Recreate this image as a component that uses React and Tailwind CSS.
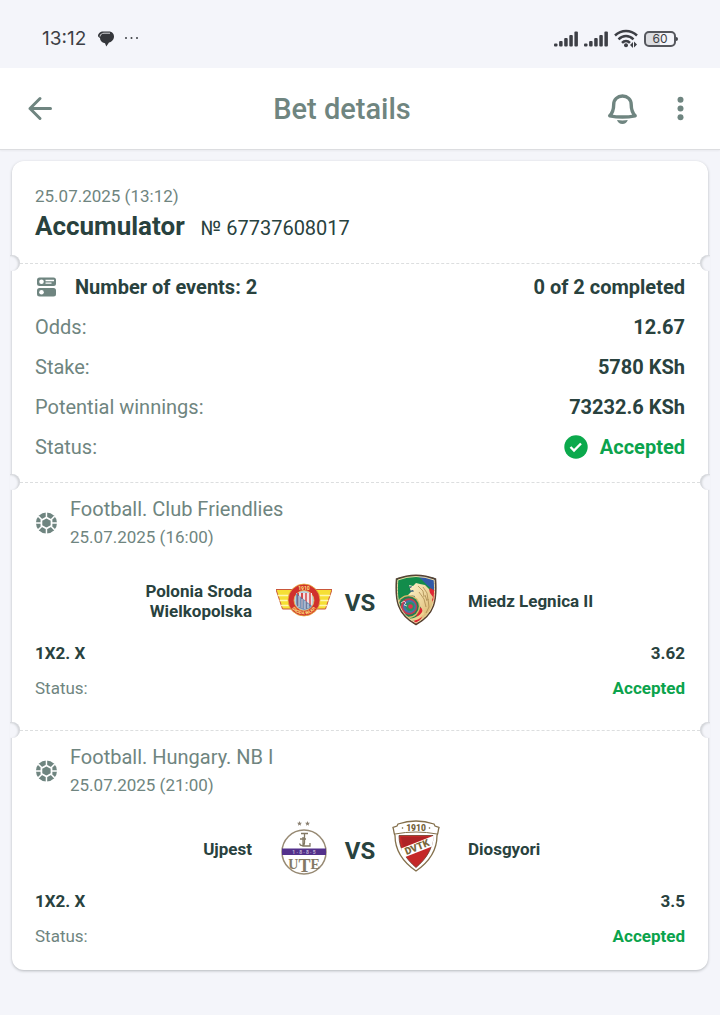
import React from 'react';

const StatusBar = () => {
  return (
    <div className="flex h-17 items-center justify-between pt-2.5 pr-[42px] pl-[42px] text-[#3d3f45]">
      <div className="flex items-center">
        <span className="font-['Inter',sans-serif] text-[19px] leading-6">13:12</span>
        <svg className="ml-3 h-4 w-4" viewBox="0 0 16 16">
          <path d="M5 .5h6c3 0 5 2.200 5 5s-2 5.500-5 6L8.300 15.500 7 12.300C3.500 11.500 2 9.500 2 7 1 6.500 0 5.800 0 4.800 0 2.500 2.500.5 5 .5z" fill="#35373b" />
          <path d="M2 5.500C2.200 3.300 4 2.200 6 2.200h6" stroke="#d5d6da" strokeWidth="1" fill="none" />
        </svg>
        <svg className="ml-2.5 h-4 w-4" viewBox="0 0 16 16" fill="currentColor">
          <circle cx="2" cy="7" r="1" />
          <circle cx="7.500" cy="7" r="1" />
          <circle cx="13" cy="7" r="1" />
        </svg>
      </div>
      <div className="flex items-center gap-1.5">
        <Signal />
        <Signal />
        <svg className="h-5 w-6" viewBox="0 0 24 20" fill="none" stroke="currentColor" strokeWidth="2.500">
          <path d="M1 6.500C7.500.5 16.500.5 23 6.500" />
          <path d="M4.500 10.300C9 6 15 6 19.500 10.300" />
          <path d="M8 13.800c2.300-2.300 5.700-2.300 8 0" />
          <circle cx="12" cy="16.300" r="2" fill="currentColor" stroke="none" />
          <path d="M16 16l3-3v6zM23 15.500L20 18.500v-6z" fill="currentColor" stroke="none" />
        </svg>
        <div className="flex items-center">
          <div className="flex h-4 w-8 items-center justify-center rounded-[5px] border-2 border-[#55575d] bg-linear-to-r from-[#dcdde1] from-50% to-transparent to-50% font-['Inter',sans-serif] text-xs leading-3">
            60
          </div>
          <div className="h-1 w-0.5 rounded-r-sm bg-[#45474d]" />
        </div>
      </div>
    </div>
  );
};

const Signal = () => (
  <svg className="h-4 w-6" viewBox="0 0 24 16" fill="currentColor">
    <rect x="0" y="12.500" width="3.500" height="3" rx="1" />
    <rect x="5.100" y="10" width="3.500" height="5.500" rx="1" />
    <rect x="10.200" y="7" width="3.500" height="8.500" rx="1" />
    <rect x="15.300" y="4" width="3.500" height="11.500" rx="1" />
    <rect x="20.400" y="0.500" width="3.500" height="15" rx="1" />
  </svg>
);

const Header = () => {
  return (
    <header className="flex h-[82px] items-center justify-between border-b border-[#dcdde0] bg-white px-6 text-[#6f8580] shadow-xs">
      <div className="flex flex-1">
        <button type="button" aria-label="Back">
          <svg className="h-8 w-8" viewBox="0 0 32 32" fill="none" stroke="currentColor" strokeWidth="3" strokeLinecap="round" strokeLinejoin="round">
            <path d="M26.500 15.500H6M16 5.500l-10 10 10 10" />
          </svg>
        </button>
      </div>
      <h1 className="pr-9 text-[29px] leading-9 font-medium">Bet details</h1>
      <div className="flex flex-1 items-center justify-end gap-[26px]">
        <button type="button" aria-label="Notifications">
          <svg className="h-8 w-8" viewBox="0 0 32 32" fill="none" stroke="currentColor" strokeWidth="3.400" strokeLinejoin="round">
            <path d="M16.500 3c-5 0-8.800 3.500-8.800 8.500 0 6-1 8.300-4 11.300 8 1.600 17.500 1.600 25.500 0-3-3-4-5.300-4-11.300 0-5-3.700-8.500-8.700-8.500z" />
            <path d="M11 27c3.600.6 7.200.6 10.800 0-1 2.800-2.700 3.900-5.400 3.900S12 29.800 11 27z" fill="currentColor" stroke="none" />
          </svg>
        </button>
        <button type="button" aria-label="More">
          <svg className="h-8 w-8" viewBox="0 0 32 32" fill="currentColor">
            <circle cx="16.500" cy="6.800" r="3" />
            <circle cx="16.500" cy="15.500" r="3" />
            <circle cx="16.500" cy="24.200" r="3" />
          </svg>
        </button>
      </div>
    </header>
  );
};

const Divider = () => (
  <div className="-my-2 flex h-4 items-center justify-between">
    <div className="-ml-0.5 h-4 w-2.5 rounded-r-full bg-[#f4f5fa] shadow-[inset_-2px_1px_2px_#d3d5d9]" />
    <div className="flex-1 border-t border-dashed border-[#dcdedf]" />
    <div className="-mr-0.5 h-4 w-2.5 rounded-l-full bg-[#f4f5fa] shadow-[inset_2px_1px_2px_#d3d5d9]" />
  </div>
);

const EventsIcon = () => (
  <svg className="h-5 w-5" viewBox="0 0 20 20">
    <rect x="0" y="0.500" width="19" height="8.500" rx="2.500" fill="#6f8580" />
    <rect x="0" y="11" width="19" height="8.500" rx="2.500" fill="#6f8580" />
    <circle cx="4.500" cy="4.800" r="2.300" fill="#fff" />
    <circle cx="4.500" cy="15.200" r="2.300" fill="#fff" />
    <path d="M8.500 3.500H17M8.500 6.200h6" stroke="#fff" strokeWidth="1.300" />
  </svg>
);

const BallIcon = () => (
  <svg className="h-[22px] w-[22px]" viewBox="0 0 24 24">
    <circle cx="12.500" cy="12" r="11.500" fill="#6f8580" />
    <path d="M12.500 6l5.500 3v6l-5.500 3-5.500-3V9z" fill="#6f8580" stroke="#fff" strokeWidth="1.900" />
    <path d="M12.500 6V0M12.500 18v6M7.500 8.500L3.500 4.500M17.500 8.500l4-4M7.500 15.500l-4 4M17.500 15.500l4 4M7 12H0M18 12h6" stroke="#fff" strokeWidth="1.600" />
  </svg>
);

const PoloniaLogo = () => (
  <svg className="h-15 w-14" viewBox="0 0 56 60">
    <path d="M0 18.500h56l-6.500 19.500h-43z" fill="#f6df35" stroke="#c9573a" strokeWidth="1" />
    <path d="M1.500 24.500h53M3.500 29.500h49M5 34.500h46" stroke="#fff6b0" strokeWidth="1.300" />
    <circle cx="28" cy="29" r="16" fill="#d0302d" stroke="#e9b23c" strokeWidth="0.800" />
    <circle cx="28" cy="29.500" r="10" fill="#b8cfdd" stroke="#efc14d" strokeWidth="0.700" />
    <path d="M20 22h16v10c0 4-4 6-8 7-4-1-8-3-8-7z" fill="#f0e3e4" />
    <path d="M22 22v13M26 22v15" stroke="#d6494a" strokeWidth="2" />
    <path d="M30 22v16M34 22v13" stroke="#d6494a" strokeWidth="1.500" />
    <path d="M20 22l16 13c-1 2-4 3-8 4-4-1-8-3-8-7z" fill="#4d79a8" fillOpacity=".75" />
    <path d="M23 25v11M26 28v9M29 30v8M32 33v4" stroke="#dbe7f1" strokeWidth=".9" />
    <path id="polonia-arc" d="M14.500 34.500C19 46.500 37 46.500 41.500 34.500" fill="none" />
    <text x="28" y="18.500" textAnchor="middle" fontSize="5" fontWeight="700" fill="#ffe27a">1910</text>
    <text fontSize="4.500" fontWeight="700" fill="#ffe27a">
      <textPath href="#polonia-arc" startOffset="50%" textAnchor="middle">SRODA WLKP.</textPath>
    </text>
  </svg>
);

const MiedzLogo = () => (
  <svg className="h-15 w-14" viewBox="0 0 56 60">
    <defs>
      <clipPath id="miedz-shield">
        <path d="M8.500 8Q28 .5 47.500 8C49 29 47 43 28 53.500 9 43 7 29 8.500 8z" />
      </clipPath>
      <linearGradient id="miedz-gold" x1="0" y1="0" x2="1" y2="1">
        <stop offset="0" stopColor="#fff3cc" />
        <stop offset=".5" stopColor="#ecd49a" />
        <stop offset="1" stopColor="#d2a95c" />
      </linearGradient>
    </defs>
    <g clipPath="url(#miedz-shield)">
      <path d="M0 0h56v60H0z" fill="#128c4b" />
      <path d="M25 0h31v27L40 15z" fill="#315aa8" />
      <path d="M42 17l8 4v40H0V42l26 8z" fill="#df2635" />
      {/* lion's mane and head */}
      <path d="M21 14l4 1 3-3 4 1 5 1 4 4 1 4 3 4-1 3 2 4-2 3 1 5-3 2-1 4-4 1-3 4-5 1 4-5 2-5-1-5-3-4-6-1-5 1-1-3 3-1-3-2 1-4 3-3z" fill="url(#miedz-gold)" />
      <path d="M30 15l5 5 1 6M35 16l4 6 1 7M31 21l5 7 2 8M40 28l1 8-3 6M37 24l2 6" stroke="#a18046" strokeWidth=".7" fill="none" />
      <path d="M20 16l4-1-1 2zM21 20l4-1 1 1.500-4 .5zM20 26l4-1.500 3 .5-1 2z" fill="#335f7c" />
      <circle cx="20.500" cy="35.500" r="11.500" fill="#dcb86a" />
      <circle cx="20.500" cy="35.500" r="10.300" fill="#247f50" />
      <circle cx="21" cy="35.500" r="8.200" fill="#c93b50" />
      <circle cx="21.500" cy="35.500" r="6.500" fill="#4474a8" />
      <circle cx="22" cy="35.500" r="4.500" fill="#289063" />
      <circle cx="22.500" cy="35.500" r="2.300" fill="#e13450" />
      <path d="M13 32l3-2 2 2-2 2 3 1" stroke="#f5dfdf" strokeWidth=".8" fill="none" />
      <path d="M17 47.500c8 1 15-2 18-8l1 3c-3 6-9 8-15 7z" fill="#efd391" />
    </g>
    <path d="M8.500 8Q28 .5 47.500 8C49 29 47 43 28 53.500 9 43 7 29 8.500 8z" fill="none" stroke="#574233" strokeWidth="1.500" />
    <path d="M9.800 9Q28 2 46.200 9C47.500 29 46 42 28 52 10 42 8.500 29 9.800 9z" fill="none" stroke="#ead9a2" strokeWidth="1" />
  </svg>
);

const UjpestLogo = () => (
  <svg className="h-15 w-14" viewBox="0 0 56 60">
    <path d="M23.500 2l.7 1.700 1.800.1-1.400 1.200.5 1.800-1.600-1-1.600 1 .5-1.800L21 3.800l1.800-.1zM31.500 2l.7 1.700 1.800.1-1.400 1.200.5 1.800-1.600-1-1.600 1 .5-1.800L29 3.800l1.800-.1z" fill="#8b8172" />
    <circle cx="28" cy="33" r="22" fill="#fff" stroke="#988b75" strokeWidth="1.500" />
    <path d="M6 29.500h44v6.500H6z" fill="#53318b" />
    <text x="28" y="34.500" textAnchor="middle" fontSize="5" fill="#bfb0d2">1 · 8 · 8 · 5</text>
    <g fill="none" stroke="#837965" strokeWidth="1.300">
      <path d="M25 14.500h7M28.500 14.500v9c0 4-4 4-5 1M24 20h6M27 18v9h7v-3" />
    </g>
    <text x="28" y="50" textAnchor="middle" fill="#837965" fontFamily="Liberation Serif, serif" fontSize="14">
      U<tspan dy="3" fontSize="18">T</tspan><tspan dy="-3">E</tspan>
    </text>
  </svg>
);

const DiosgyorLogo = () => (
  <svg className="h-15 w-14" viewBox="0 0 56 60">
    <path d="M10 5Q28-1 46 5l1 2 4 1.500c-1 3-.5 5-2 8 0 15-8 26.500-21 35.500C15 43 7 31.500 7 16.500 5.500 13.500 6 11.500 5 8.500L9 7z" fill="#fff" stroke="#84704c" strokeWidth="1.300" />
    <path d="M11 16.500h34C45 30 38 40 28 48.500 18 40 11 30 11 16.500z" fill="#c52828" stroke="#6d3e2a" strokeWidth=".8" />
    <path d="M7 15q21-4 42 0" fill="none" stroke="#84704c" strokeWidth="1" />
    <path d="M13 18h28L15 28z" fill="#931f26" fillOpacity=".45" />
    <path d="M13 29.500L46 16.500l-2 11-28 11z" fill="#fff" />
    <text x="28" y="12" textAnchor="middle" fontSize="8.500" fontWeight="900" fill="#746239">1910</text>
    <circle cx="14.500" cy="9" r=".8" fill="#746239" />
    <circle cx="41.500" cy="9" r=".8" fill="#746239" />
    <text x="29" y="31.500" textAnchor="middle" fontSize="10" fontWeight="900" fill="#796639" transform="rotate(-22 29 28)">DVTK</text>
  </svg>
);

const events = [
  {
    league: 'Football. Club Friendlies',
    date: '25.07.2025 (16:00)',
    home: 'Polonia Sroda Wielkopolska',
    away: 'Miedz Legnica II',
    HomeLogo: PoloniaLogo,
    AwayLogo: MiedzLogo,
    odds: '3.62',
  },
  {
    league: 'Football. Hungary. NB I',
    date: '25.07.2025 (21:00)',
    home: 'Ujpest',
    away: 'Diosgyori',
    HomeLogo: UjpestLogo,
    AwayLogo: DiosgyorLogo,
    odds: '3.5',
  },
];

const summary = [
  { label: 'Odds:', value: '12.67' },
  { label: 'Stake:', value: '5780 KSh' },
  { label: 'Potential winnings:', value: '73232.6 KSh' },
];

const EventItem = ({ event }) => {
  const { HomeLogo, AwayLogo } = event;
  return (
    <section className="px-[23px] pt-[13px] pb-[22px]">
      <div className="flex items-center gap-[13px] text-[#6f8580]">
        <BallIcon />
        <div>
          <h3 className="text-xl leading-7">{event.league}</h3>
          <p className="text-[17px] leading-7">{event.date}</p>
        </div>
      </div>
      <div className="mt-5 flex items-center gap-6 text-[17px] leading-5 font-bold">
        <div className="flex flex-1 justify-end">
          <p className="max-w-32 text-right">{event.home}</p>
        </div>
        <div className="flex items-center gap-3">
          <HomeLogo />
          <span className="w-8 pt-1 text-center text-2xl">VS</span>
          <AwayLogo />
        </div>
        <p className="flex-1">{event.away}</p>
      </div>
      <div className="mt-2.5 flex justify-between text-[17px] leading-6 font-bold">
        <span>1X2. X</span>
        <span>{event.odds}</span>
      </div>
      <div className="mt-[11px] flex justify-between text-[17px] leading-6">
        <span className="text-[#6f8580]">Status:</span>
        <span className="font-bold text-[#0ba34c]">Accepted</span>
      </div>
    </section>
  );
};

const App = () => {
  return (
    <div className="min-h-screen bg-[#f4f5fa] font-['Roboto',sans-serif] text-[#29423e]">
      <StatusBar />
      <Header />
      <main className="mx-3 mt-[11px] rounded-xl bg-white shadow-[0_1px_3px_#b4b7bc]">
        <section className="px-[23px] pt-[23px] pb-[19px]">
          <p className="text-[17px] leading-6 text-[#6f8580]">25.07.2025 (13:12)</p>
          <div className="flex items-baseline gap-4">
            <h2 className="text-[26px] leading-9 font-bold">Accumulator</h2>
            <span className="text-xl">№ 67737608017</span>
          </div>
        </section>
        <Divider />
        <section className="px-[23px] pt-1 pb-[15px] text-xl leading-10">
          <div className="flex items-center justify-between font-bold">
            <h3 className="flex items-center gap-[18px] pl-0.5">
              <EventsIcon />
              Number of events: 2
            </h3>
            <span>0 of 2 completed</span>
          </div>
          <dl>
            {summary.map((row) => (
              <div key={row.label} className="flex justify-between">
                <dt className="text-[#6f8580]">{row.label}</dt>
                <dd className="font-bold">{row.value}</dd>
              </div>
            ))}
            <div className="flex justify-between">
              <dt className="text-[#6f8580]">Status:</dt>
              <dd className="flex items-center gap-3 font-bold text-[#0ba34c]">
                <svg className="h-6 w-6" viewBox="0 0 24 24">
                  <circle cx="12" cy="12" r="11.700" fill="#0ba94c" />
                  <path d="M6.500 12l3.500 3.500 7-7" fill="none" stroke="#fff" strokeWidth="2.400" />
                </svg>
                Accepted
              </dd>
            </div>
          </dl>
        </section>
        {events.map((event) => (
          <React.Fragment key={event.league}>
            <Divider />
            <div className="not-last:pb-2">
              <EventItem event={event} />
            </div>
          </React.Fragment>
        ))}
      </main>
    </div>
  );
};

export default App;
